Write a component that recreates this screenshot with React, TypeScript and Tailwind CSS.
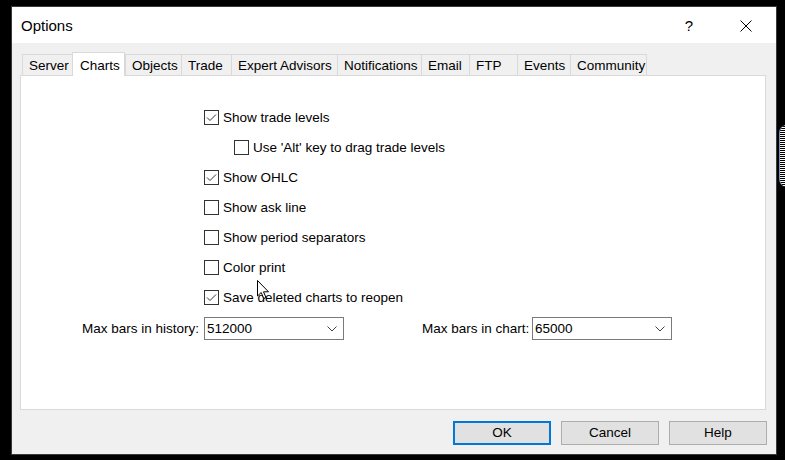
import { useState } from "react"

const tabs = [
  { name: "Server", w: "w-[50px]" },
  { name: "Charts", w: "w-[53px]" },
  { name: "Objects", w: "w-[56px]" },
  { name: "Trade", w: "w-[50px]" },
  { name: "Expert Advisors", w: "w-[106px]" },
  { name: "Notifications", w: "w-[84px]" },
  { name: "Email", w: "w-[48px]" },
  { name: "FTP", w: "w-[48px]" },
  { name: "Events", w: "w-[53px]" },
  { name: "Community", w: "w-[77px]" },
]

const options = [
  { label: "Show trade levels", checked: true },
  { label: "Use 'Alt' key to drag trade levels", checked: false, sub: true },
  { label: "Show OHLC", checked: true },
  { label: "Show ask line", checked: false },
  { label: "Show period separators", checked: false },
  { label: "Color print", checked: false },
  { label: "Save deleted charts to reopen", checked: true },
]

function CheckBox({ checked }: { checked: boolean }) {
  return (
    <div className="flex h-[15px] w-[15px] shrink-0 items-center justify-center border border-[#333333] bg-white">
      {checked && (
        <svg width="13" height="13" viewBox="0 0 13 13">
          <polyline points="2,6.5 5,9.5 11,3.5" fill="none" stroke="#333333" strokeWidth="1" />
        </svg>
      )}
    </div>
  )
}

function Combo({ value }: { value: string }) {
  return (
    <div className="flex h-[23px] w-[140px] items-center border border-[#7a7a7a] bg-white pl-[2px] pr-[6px]">
      <span className="relative top-[1px] flex-1">{value}</span>
      <svg width="10" height="6" viewBox="0 0 10 6">
        <polyline points="0.5,0.5 5,5 9.5,0.5" fill="none" stroke="#444444" strokeWidth="1" />
      </svg>
    </div>
  )
}

export default function App() {
  const [active] = useState("Charts")

  return (
    <div className="relative h-[460px] w-[785px] overflow-hidden bg-black pl-[11px] pt-[6px] font-['Liberation_Sans',Arial,sans-serif] text-[13.5px] text-black">
      <div className="flex h-[449px] w-[766px] flex-col border border-[#3a3a3a] bg-[#f0f0f0]">
        {/* title bar */}
        <div className="flex h-[36px] items-center bg-white pl-[9px] pt-[2px]">
          <span className="text-[15px]">Options</span>
          <div className="ml-auto flex items-center">
            <div className="mr-[11px] flex w-[46px] justify-center text-[15px]">?</div>
            <div className="mr-[7px] flex w-[46px] justify-center">
              <svg width="12" height="12" viewBox="0 0 12 12">
                <path d="M0.5 0.5 L11.5 11.5 M11.5 0.5 L0.5 11.5" stroke="#000" strokeWidth="1" />
              </svg>
            </div>
          </div>
        </div>

        {/* tabs */}
        <div className="ml-[10px] mt-[9px] flex h-[23px] items-end">
          {tabs.map((t, i) =>
            t.name == active ? (
              <div
                key={t.name}
                className={`relative z-10 -mb-px flex h-[24px] items-start border border-b-0 border-[#d9d9d9] bg-white pl-[7px] pt-[3px] ${t.w}`}
              >
                {t.name}
              </div>
            ) : (
              <div
                key={t.name}
                className={`flex h-[21px] items-center border-l border-t border-[#d9d9d9] bg-[#f0f0f0] pl-[6px] pt-[2px] ${t.w} ${
                  i == tabs.length - 1 ? "border-r" : ""
                }`}
              >
                {t.name}
              </div>
            )
          )}
        </div>

        {/* panel */}
        <div className="ml-[8px] flex h-[335px] w-[746px] flex-col border border-[#d9d9d9] bg-white pt-[26px]">
          {options.map((o) => (
            <div
              key={o.label}
              className={`flex h-[30px] items-center gap-[4px] ${o.sub ? "pl-[213px]" : "pl-[183px]"}`}
            >
              <CheckBox checked={o.checked} />
              <span className="relative top-[1px]">{o.label}</span>
            </div>
          ))}
          <div className="mt-[5px] flex items-center pl-[61px]">
            <span className="relative top-[1px] w-[122px]">Max bars in history:</span>
            <Combo value="512000" />
            <span className="relative top-[1px] ml-[78px] w-[110px]">Max bars in chart:</span>
            <Combo value="65000" />
          </div>
        </div>

        {/* buttons */}
        <div className="mt-[11px] flex justify-end gap-[10px] pr-[9px]">
          <button className="h-[24px] w-[98px] border-2 border-[#0078d7] bg-[#e1e1e1]">OK</button>
          <button className="h-[24px] w-[98px] border border-[#adadad] bg-[#e1e1e1]">Cancel</button>
          <button className="h-[24px] w-[98px] border border-[#adadad] bg-[#e1e1e1]">Help</button>
        </div>
      </div>

      {/* striped edge of window behind */}
      <div className="absolute left-[779px] top-[125px] h-[62px] w-[8px] rounded-l-full border-l border-[#6d8fc4] bg-[repeating-linear-gradient(to_bottom,#ffffff_0px,#ffffff_1px,#000000_1px,#000000_2px)]" />

      {/* mouse pointer */}
      <svg className="absolute left-[257px] top-[280px]" width="13" height="20" viewBox="0 0 13 20">
        <path
          d="M0.5 0.5 L0.5 16 L4.2 12.5 L6.8 18.5 L9 17.5 L6.5 11.8 L11.5 11.8 Z"
          fill="#ffffff"
          stroke="#000000"
          strokeWidth="1"
        />
      </svg>
    </div>
  )
}
